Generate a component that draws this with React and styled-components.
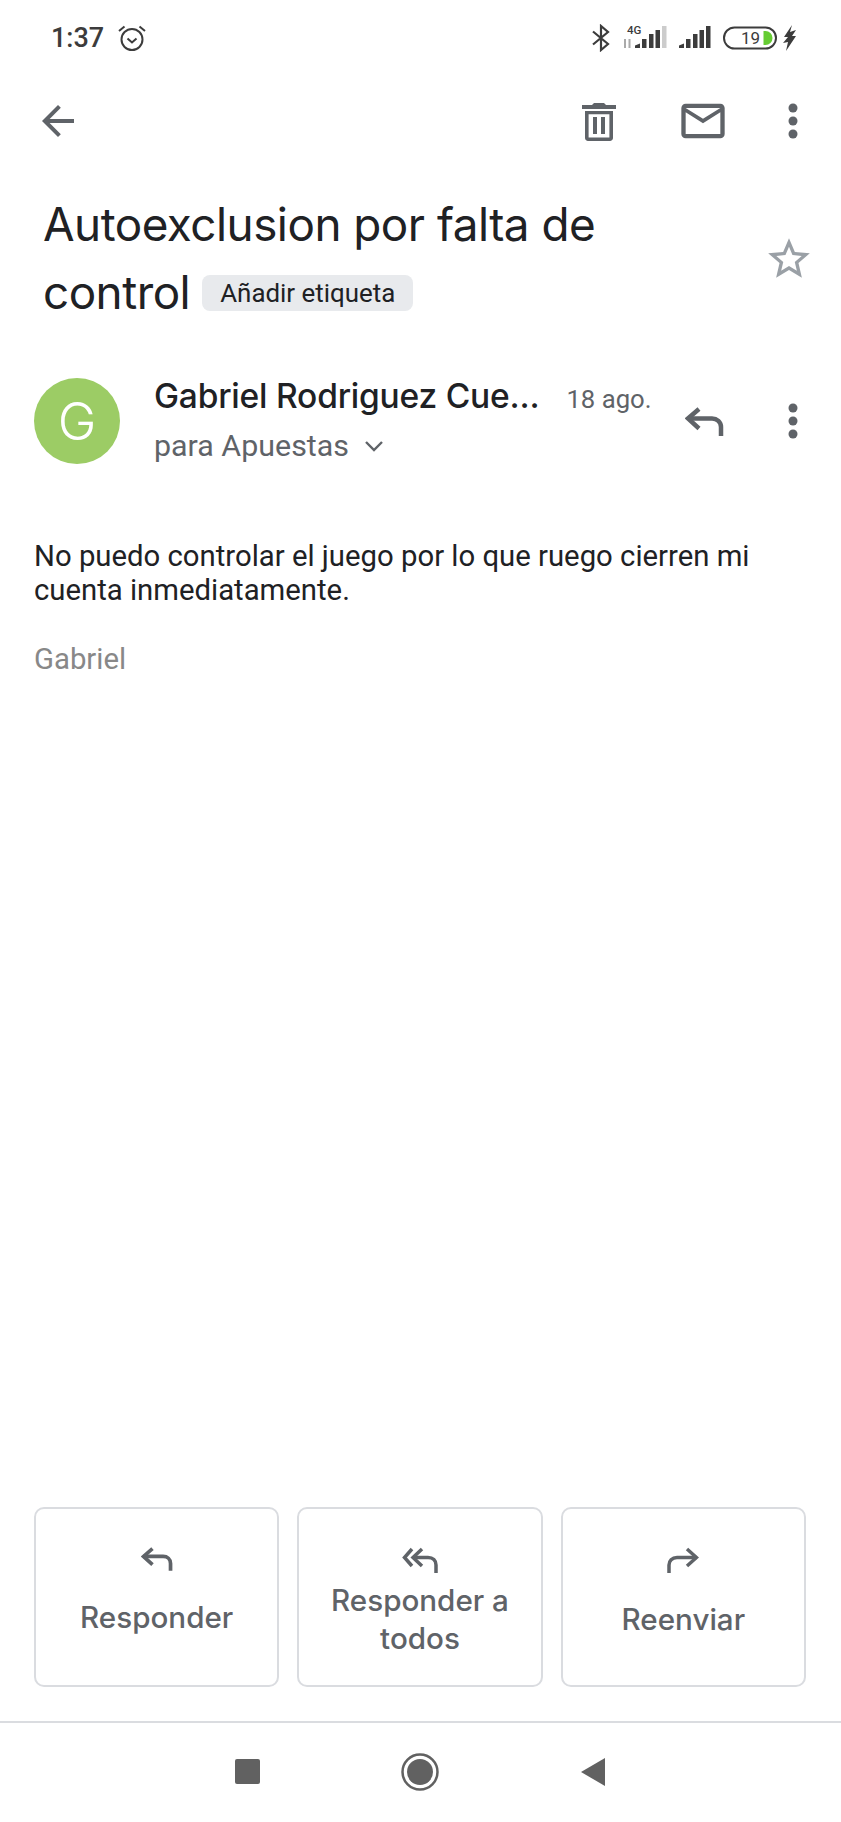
import styled, { createGlobalStyle } from "styled-components";

const GlobalStyle = createGlobalStyle`
  html, body {
    margin: 0;
    padding: 0;
    background: #fff;
  }
`;

const Screen = styled.div`
  width: 841px;
  height: 1822px;
  display: flex;
  flex-direction: column;
  font-family: Roboto, "Liberation Sans", sans-serif;
  color: #202124;
  overflow: hidden;
`;

const StatusBar = styled.div`
  height: 76px;
  flex: none;
  display: flex;
  align-items: center;
  justify-content: space-between;
  padding: 0 44px 0 51px;
  color: #3c3c3c;
`;

const StatusGroup = styled.div`
  display: flex;
  align-items: center;
  gap: ${(p) => p.$gap || 0}px;
`;

const Time = styled.span`
  font-size: 27px;
  font-weight: 500;
`;

const BoltWrap = styled.div`
  display: flex;
  margin-left: -6px;
`;

const Toolbar = styled.div`
  height: 90px;
  flex: none;
  display: flex;
  align-items: center;
  justify-content: space-between;
  padding: 0 26px 0 34px;
`;

const ToolbarRight = styled.div`
  display: flex;
  align-items: center;
`;

const IconSlot = styled.div`
  display: flex;
  align-items: center;
  justify-content: center;
  flex: none;
  width: ${(p) => p.$w}px;
  margin-right: ${(p) => p.$mr || 0}px;
`;

const Subject = styled.div`
  flex: none;
  display: flex;
  align-items: center;
  padding: 25px 27px 0 43px;
`;

const SubjectText = styled.h1`
  flex: 1;
  margin: 0;
  font-family: Inter, "Open Sans", sans-serif;
  font-size: 45.8px;
  line-height: 68px;
  font-weight: 400;
  letter-spacing: -0.5px;
`;

const Chip = styled.span`
  display: inline-block;
  margin-left: 12px;
  padding: 0 18px;
  height: 36px;
  line-height: 36px;
  border-radius: 8px;
  background: #e8eaed;
  font-family: Roboto, sans-serif;
  font-size: 25.9px;
  letter-spacing: 0;
  vertical-align: 7px;
  color: #202124;
`;

const Sender = styled.div`
  flex: none;
  margin-top: 51px;
  padding: 0 30px 0 34px;
  display: flex;
  align-items: center;
`;

const Avatar = styled.div`
  width: 86px;
  height: 86px;
  flex: none;
  border-radius: 50%;
  background: #9ccc65;
  color: #fff;
  font-family: Inter, sans-serif;
  font-weight: 300;
  font-size: 52px;
  display: flex;
  align-items: center;
  justify-content: center;
`;

const SenderInfo = styled.div`
  flex: 1;
  margin: -5px 0 0 34px;
  display: flex;
  flex-direction: column;
  gap: 12px;
`;

const NameRow = styled.div`
  display: flex;
  align-items: baseline;
  gap: 27px;
`;

const Name = styled.span`
  font-family: Inter, sans-serif;
  font-size: 33.5px;
  font-weight: 500;
  line-height: 42px;
  letter-spacing: -0.2px;
`;

const DateText = styled.span`
  font-size: 25.7px;
  color: #5f6368;
`;

const ToLine = styled.div`
  display: flex;
  align-items: center;
  gap: 15px;
  font-size: 30.4px;
  line-height: 34px;
  color: #5f6368;
`;

const Body = styled.div`
  flex: 1;
  padding: 75px 34px 0;
  font-size: 29.3px;
  line-height: 34px;
  color: #202124;
`;

const Signature = styled.div`
  margin-top: 35px;
  color: #888;
`;

const Actions = styled.div`
  flex: none;
  padding: 0 35px 0 34px;
  display: grid;
  grid-template-columns: repeat(3, 1fr);
  gap: 18px;
`;

const ActionButton = styled.div`
  height: 180px;
  box-sizing: border-box;
  border: 2px solid #dadce0;
  border-radius: 10px;
  display: flex;
  flex-direction: column;
  align-items: center;
  padding: 38px 16px 0;
  text-align: center;
  font-family: Inter, sans-serif;
  font-size: 29.6px;
  line-height: 38px;
  font-weight: 500;
  color: #5f6368;
`;

const ActionLabel = styled.div`
  margin-top: ${(p) => p.$top}px;
`;

const NavBar = styled.div`
  flex: none;
  margin-top: 34px;
  height: 97px;
  padding-bottom: 2px;
  border-top: 2px solid #dadce0;
  display: flex;
  align-items: center;
  justify-content: center;
  gap: 141px;
`;

const Square = styled.div`
  width: 25px;
  height: 25px;
  background: #616161;
  border-radius: 2px;
`;

const Back = () => (
  <svg width="48" height="48" viewBox="0 0 24 24" fill="#5f6368">
    <path d="M20 11H7.830l5.590-5.590L12 4l-8 8 8 8 1.410-1.410L7.830 13H20v-2z" />
  </svg>
);

const Trash = () => (
  <svg width="44" height="44" viewBox="0 0 22 22" fill="#5f6368">
    <path d="M4 6h14v13.500c0 .8-.7 1.500-1.500 1.500h-11C4.700 21 4 20.300 4 19.500V6zm1.800 1.600V19.300h10.400V7.600H5.800z" />
    <path d="M2.500 3h5l1-1h5l1 1h5v2h-17zM8 9h2v8.500H8zM12 9h2v8.500h-2z" />
  </svg>
);

const Mail = () => (
  <svg width="52" height="52" viewBox="0 0 24 24" fill="#5f6368">
    <path d="M20 4H4c-1.100 0-1.990.9-1.990 2L2 18c0 1.100.9 2 2 2h16c1.100 0 2-.9 2-2V6c0-1.100-.9-2-2-2zm0 14H4V8l8 5 8-5v10zm-8-7L4 6h16l-8 5z" />
  </svg>
);

const Dots = () => (
  <svg width="14" height="36" viewBox="0 0 14 36" fill="#5f6368">
    <circle cx="7" cy="5" r="4.500" />
    <circle cx="7" cy="18" r="4.500" />
    <circle cx="7" cy="31" r="4.500" />
  </svg>
);

const Star = () => (
  <svg width="50" height="50" viewBox="0 0 24 24" fill="#9aa0a6">
    <path d="M22 9.240l-7.190-.62L12 2 9.190 8.630 2 9.240l5.460 4.730L5.820 21 12 17.270 18.180 21l-1.630-7.030L22 9.240zM12 15.400l-3.760 2.270 1-4.280-3.320-2.880 4.380-.38L12 6.100l1.710 4.040 4.380.38-3.320 2.880 1 4.280L12 15.400z" />
  </svg>
);

const Reply = ({ width }) => (
  <svg width={width} height={(width * 29) / 39} viewBox="0 0 39 29" fill="none" stroke="#5f6368" strokeWidth="4.500">
    <path d="M14 2L3 11.500L14 21.500" />
    <path d="M3 11.500H27C32 11.500 36 15 36 20V29" />
  </svg>
);

const ReplyAll = () => (
  <svg width="36" height="26" viewBox="0 0 36 26" fill="none" stroke="#5f6368" strokeWidth="3.500">
    <path d="M10 2L2.500 10.500L10 19" />
    <path d="M20 2L11 10.500L20 19" />
    <path d="M11 10.500H26C31 10.500 34 13.500 34 18V26" />
  </svg>
);

const Forward = () => (
  <svg width="32" height="26" viewBox="0 0 32 26" fill="none" stroke="#5f6368" strokeWidth="3.500">
    <path d="M20 2L29.500 10.500L20 19" />
    <path d="M29.500 10.500H10C5 10.500 2 14 2 18V26" />
  </svg>
);

const Alarm = () => (
  <svg width="30" height="30" viewBox="0 0 30 30" fill="none" stroke="#3c3c3c" strokeWidth="2">
    <circle cx="15" cy="16.500" r="10.500" />
    <path d="M10.500 15.500L15 19.500L19.500 15.500" />
    <path d="M2 8L7.500 3.500M28 8L22.500 3.500" />
  </svg>
);

const Bluetooth = () => (
  <svg width="20" height="28" viewBox="0 0 20 28" fill="none" stroke="#3c3c3c" strokeWidth="2.200">
    <path d="M2 7.500L17 20L10 26V2L17 8L2 20.500" />
  </svg>
);

const Bars = () => (
  <g fill="#3c3c3c">
    <path d="M0 22V19.500L5 17.500V22Z" />
    <rect x="7" y="13" width="4.500" height="9" />
    <rect x="14" y="8" width="4.500" height="14" />
    <rect x="20.500" y="4" width="4.500" height="18" />
  </g>
);

const Signal = ({ label }) =>
  label ? (
    <svg width="44" height="32" viewBox="0 -4 44 32">
      <text x="4" y="8" fontFamily="Roboto, sans-serif" fontSize="11.500" fontWeight="500" fill="#3c3c3c">
        4G
      </text>
      <path d="M2 22V13M6.500 13V22" stroke="#aaa" strokeWidth="2" />
      <g transform="translate(12 0)">
        <Bars />
        <rect x="27" y="0" width="4.500" height="22" fill="#ccc" />
      </g>
    </svg>
  ) : (
    <svg width="32" height="32" viewBox="0 -4 32 32">
      <Bars />
      <rect x="27" y="0" width="4.500" height="22" fill="#3c3c3c" />
    </svg>
  );

const Battery = () => (
  <svg width="54" height="24" viewBox="0 0 54 24">
    <rect x="1" y="1.500" width="52" height="21" rx="10.500" fill="none" stroke="#3c3c3c" strokeWidth="2" />
    <text x="18" y="18" fontFamily="Roboto, sans-serif" fontSize="17" fill="#3c3c3c">
      19
    </text>
    <path d="M40.500 5h2a7 7 0 0 1 0 14h-2z" fill="#66cc33" />
  </svg>
);

const Bolt = () => (
  <svg width="14" height="26" viewBox="0 0 14 26" fill="#3c3c3c">
    <path d="M9 0L1 12H5L0 18L5 17L3 26L13 11H9L13 5L7 7Z" />
  </svg>
);

const Chevron = () => (
  <svg width="20" height="14" viewBox="0 0 20 14" fill="none" stroke="#5f6368" strokeWidth="2.400">
    <path d="M2 3L10 11L18 3" />
  </svg>
);

const Circle = () => (
  <svg width="38" height="38" viewBox="0 0 38 38">
    <circle cx="19" cy="19" r="17.500" fill="none" stroke="#616161" strokeWidth="2.500" />
    <circle cx="19" cy="19" r="13" fill="#616161" />
  </svg>
);

const Triangle = () => (
  <svg width="26" height="30" viewBox="0 0 26 30" fill="#616161">
    <path d="M25 1V29L1 15Z" />
  </svg>
);

export default function App() {
  return (
    <Screen>
      <GlobalStyle />
      <StatusBar>
        <StatusGroup $gap={13}>
          <Time>1:37</Time>
          <Alarm />
        </StatusGroup>
        <StatusGroup $gap={12}>
          <Bluetooth />
          <Signal label />
          <Signal />
          <Battery />
          <BoltWrap>
            <Bolt />
          </BoltWrap>
        </StatusGroup>
      </StatusBar>

      <Toolbar>
        <Back />
        <ToolbarRight>
          <IconSlot $w={72}>
            <Trash />
          </IconSlot>
          <IconSlot $w={136}>
            <Mail />
          </IconSlot>
          <IconSlot $w={44}>
            <Dots />
          </IconSlot>
        </ToolbarRight>
      </Toolbar>

      <Subject>
        <SubjectText>
          Autoexclusion por falta de
          <br />
          control
          <Chip>Añadir etiqueta</Chip>
        </SubjectText>
        <Star />
      </Subject>

      <Sender>
        <Avatar>G</Avatar>
        <SenderInfo>
          <NameRow>
            <Name>Gabriel Rodriguez Cue...</Name>
            <DateText>18 ago.</DateText>
          </NameRow>
          <ToLine>
            para Apuestas
            <Chevron />
          </ToLine>
        </SenderInfo>
        <IconSlot $w={40} $mr={51}>
          <Reply width={39} />
        </IconSlot>
        <IconSlot $w={36}>
          <Dots />
        </IconSlot>
      </Sender>

      <Body>
        No puedo controlar el juego por lo que ruego cierren mi
        <br />
        cuenta inmediatamente.
        <Signature>Gabriel</Signature>
      </Body>

      <Actions>
        <ActionButton>
          <Reply width={32} />
          <ActionLabel $top={27}>Responder</ActionLabel>
        </ActionButton>
        <ActionButton>
          <ReplyAll />
          <ActionLabel $top={8}>
            Responder a
            <br />
            todos
          </ActionLabel>
        </ActionButton>
        <ActionButton>
          <Forward />
          <ActionLabel $top={27}>Reenviar</ActionLabel>
        </ActionButton>
      </Actions>

      <NavBar>
        <Square />
        <Circle />
        <Triangle />
      </NavBar>
    </Screen>
  );
}
